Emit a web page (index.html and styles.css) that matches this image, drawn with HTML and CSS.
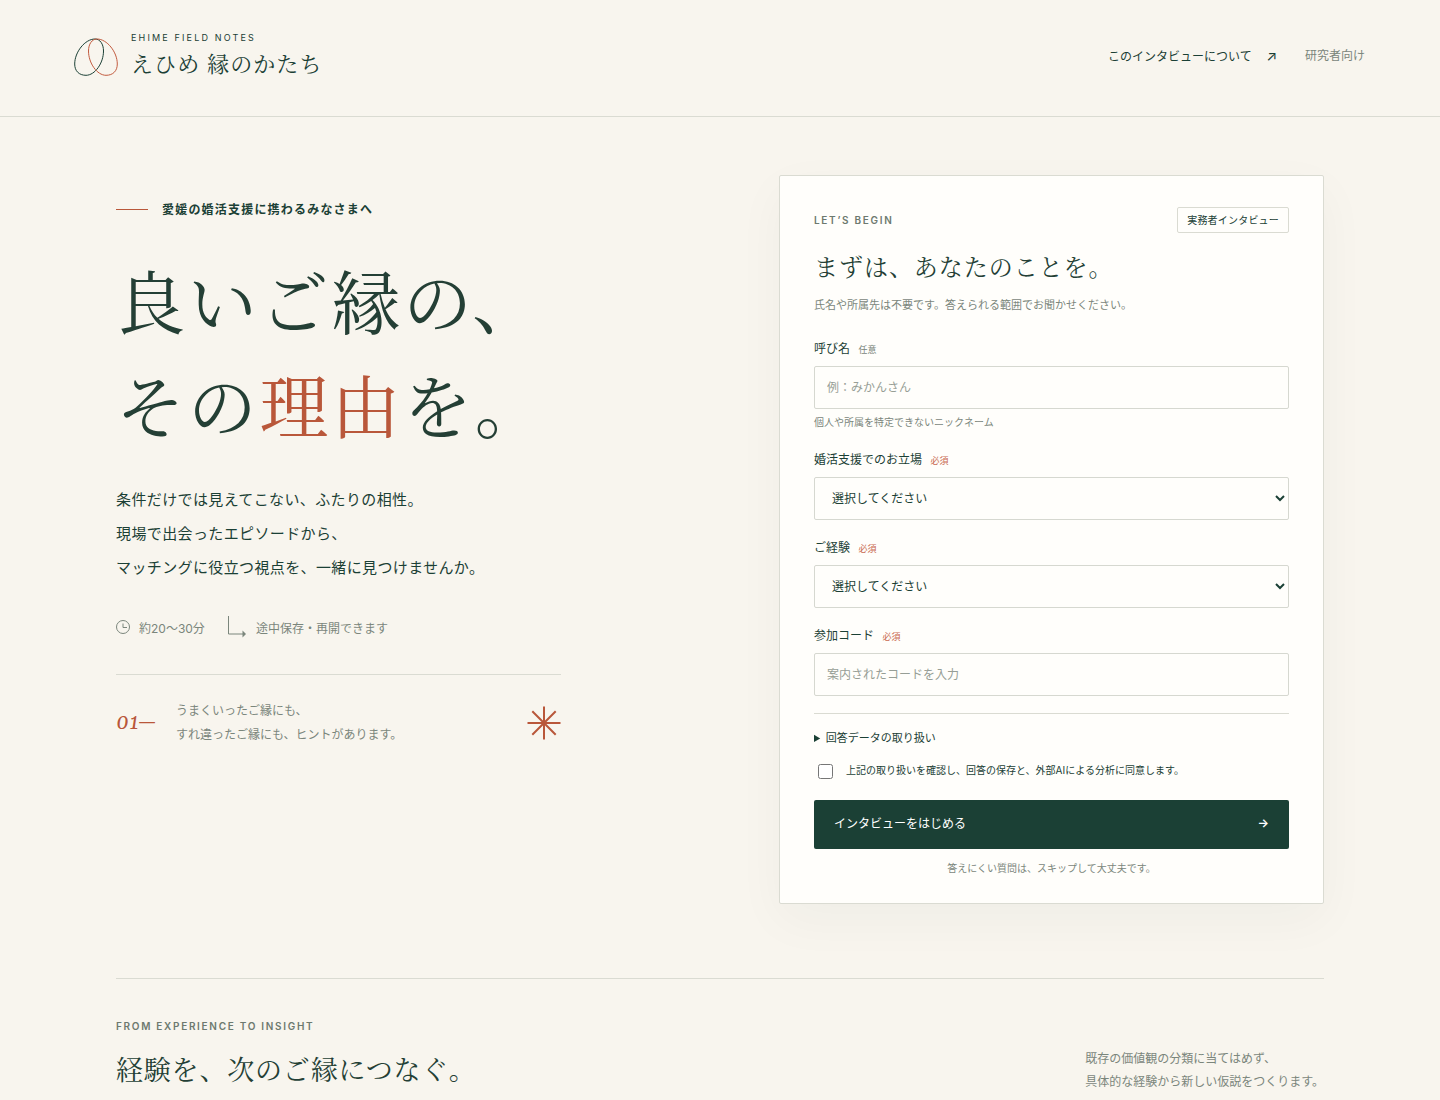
FILE: index.html
```html
<!DOCTYPE html>
<html lang="ja">
<head>
<meta charset="utf-8">
<meta name="viewport" content="width=device-width, initial-scale=1.0">
<title>えひめ 縁のかたち</title>
<link rel="stylesheet" href="styles.css">
</head>
<body>
<header class="site-header">
  <a class="brand" href="#">
    <svg class="brand-mark" viewBox="0 0 44 44" aria-hidden="true">
      <path d="M21 5C26 5 29.5 10 29.5 17C29.5 29 21 41.3 12 41.3C5 41.3 .7 37 .7 30C.7 18 11 5 21 5Z" stroke="#1b4035"/>
      <path d="M23 5C18 5 14.5 10 14.5 17C14.5 29 23 41.3 32 41.3C39 41.3 43.3 37 43.3 30C43.3 18 33 5 23 5Z" stroke="#c25b3f"/>
    </svg>
    <span class="brand-text">
      <span class="brand-sub">EHIME FIELD NOTES</span>
      <span class="brand-name">えひめ 縁のかたち</span>
    </span>
  </a>
  <nav class="site-nav">
    <a href="#about">このインタビューについて <span class="nav-arrow">↗</span></a>
    <a class="nav-muted" href="#research">研究者向け</a>
  </nav>
</header>

<main>
  <section class="hero">
    <div class="intro">
      <p class="eyebrow">愛媛の婚活支援に携わるみなさまへ</p>
      <h1>良いご縁の、<br>その<em>理由</em>を。</h1>
      <p class="lead">条件だけでは見えてこない、ふたりの相性。<br>現場で出会ったエピソードから、<br>マッチングに役立つ視点を、一緒に見つけませんか。</p>
      <div class="meta">
        <span class="meta-item">
          <svg class="icon-clock" viewBox="0 0 14 14" aria-hidden="true"><circle cx="7" cy="7" r="6.5"/><path d="M7 3.5V7.5H11"/></svg>
          約20〜30分
        </span>
        <span class="meta-item">
          <svg class="icon-resume" viewBox="0 0 20 22" aria-hidden="true"><path d="M1.5 0V18H16"/><path class="tip" d="M15.5 14.5L19 18L15.5 21.5Z"/></svg>
          途中保存・再開できます
        </span>
      </div>
      <div class="note">
        <span class="note-num">01—</span>
        <p>うまくいったご縁にも、<br>すれ違ったご縁にも、ヒントがあります。</p>
        <svg class="note-star" viewBox="0 0 34 34" aria-hidden="true"><path d="M17 .5V33.5M.5 17H33.5M5.3 5.3L28.7 28.7M28.7 5.3L5.3 28.7"/></svg>
      </div>
    </div>

    <form class="card">
      <div class="card-top">
        <span class="label-en">LET’S BEGIN</span>
        <span class="badge">実務者インタビュー</span>
      </div>
      <h2>まずは、あなたのことを。</h2>
      <p class="card-desc">氏名や所属先は不要です。答えられる範囲でお聞かせください。</p>

      <div class="field">
        <label for="nickname">呼び名 <small>任意</small></label>
        <input type="text" id="nickname" placeholder="例：みかんさん">
        <p class="help">個人や所属を特定できないニックネーム</p>
      </div>
      <div class="field">
        <label for="role">婚活支援でのお立場 <small class="required">必須</small></label>
        <select id="role"><option>選択してください</option></select>
      </div>
      <div class="field">
        <label for="years">ご経験 <small class="required">必須</small></label>
        <select id="years"><option>選択してください</option></select>
      </div>
      <div class="field">
        <label for="code">参加コード <small class="required">必須</small></label>
        <input type="text" id="code" placeholder="案内されたコードを入力">
      </div>

      <details class="policy">
        <summary>回答データの取り扱い</summary>
      </details>
      <label class="consent" for="consent">
        <input type="checkbox" id="consent">
        <span>上記の取り扱いを確認し、回答の保存と、外部AIによる分析に同意します。</span>
      </label>
      <button type="submit" class="start">インタビューをはじめる <span class="start-arrow">→</span></button>
      <p class="card-foot">答えにくい質問は、スキップして大丈夫です。</p>
    </form>
  </section>

  <section class="insight" id="about">
    <div>
      <p class="label-en">FROM EXPERIENCE TO INSIGHT</p>
      <h2>経験を、次のご縁につなぐ。</h2>
    </div>
    <p class="insight-text">既存の価値観の分類に当てはめず、<br>具体的な経験から新しい仮説をつくります。</p>
  </section>
</main>
</body>
</html>
```
FILE: styles.css
```css
:root {
  --paper: #f8f5ee;
  --card: #fffefb;
  --ink: #1b4035;
  --heading: #243f35;
  --muted: #7b867c;
  --accent: #b9573a;
  --line: #dadbd2;
  --serif: "Noto Serif CJK JP", "Noto Serif JP", serif;
  --sans: Inter, "Noto Sans CJK JP", sans-serif;
}

* {
  box-sizing: border-box;
}

body {
  margin: 0;
  background: var(--paper);
  color: var(--ink);
  font-family: var(--sans);
  font-size: 12px;
}

h1, h2, p {
  margin: 0;
}

h1, h2 {
  font-family: var(--serif);
  font-weight: 400;
  color: var(--heading);
}

a {
  color: inherit;
  text-decoration: none;
}

/* header */
.site-header {
  display: flex;
  justify-content: space-between;
  align-items: center;
  height: 117px;
  padding: 0 75px 4px;
  border-bottom: 1px solid var(--line);
}

.brand {
  display: flex;
  align-items: center;
  gap: 13px;
}

.brand-mark {
  width: 44px;
  height: 44px;
  margin-left: -1px;
  fill: none;
}

.brand-text {
  display: flex;
  flex-direction: column;
}

.brand-sub {
  font-size: 9px;
  line-height: 14px;
  letter-spacing: .24em;
}

.brand-name {
  font-family: var(--serif);
  font-size: 22px;
  line-height: 36px;
  letter-spacing: .05em;
}

.site-nav {
  display: flex;
  align-items: center;
  gap: 28px;
  line-height: 20px;
}

.nav-arrow {
  margin-left: 11px;
  font-size: 14px;
}

.nav-muted {
  color: var(--muted);
}

/* hero */
main {
  padding: 58px 116px;
}

.hero {
  display: grid;
  grid-template-columns: 445px 545px;
  justify-content: space-between;
  align-items: start;
  padding-bottom: 74px;
}

.intro {
  padding-top: 24px;
}

.eyebrow {
  display: flex;
  align-items: center;
  gap: 14px;
  font-weight: 700;
  line-height: 21px;
  letter-spacing: .1em;
}

.eyebrow::before {
  content: "";
  width: 32px;
  height: 1px;
  background: var(--accent);
}

h1 {
  margin-top: 28px;
  font-size: 69px;
  line-height: 104px;
  letter-spacing: .04em;
  white-space: nowrap;
}

h1 em {
  font-style: normal;
  color: var(--accent);
}

.lead {
  margin-top: 27px;
  font-size: 15px;
  line-height: 34px;
  letter-spacing: .025em;
}

.meta {
  display: flex;
  gap: 22px;
  margin-top: 31px;
  color: var(--muted);
}

.meta-item {
  display: flex;
  align-items: center;
  gap: 9px;
}

.meta svg {
  fill: none;
  stroke: currentColor;
}

.icon-clock {
  width: 14px;
  height: 14px;
}

.icon-resume {
  width: 20px;
  height: 22px;
}

.icon-resume .tip {
  fill: currentColor;
  stroke: none;
}

.note {
  display: flex;
  align-items: center;
  gap: 20px;
  margin-top: 36px;
  padding-top: 24px;
  border-top: 1px solid var(--line);
  color: var(--muted);
  line-height: 24px;
}

.note-num {
  font-family: Georgia, Gelasio, serif;
  font-size: 21px;
  font-style: italic;
  color: var(--accent);
}

.note-star {
  width: 34px;
  height: 34px;
  margin-left: auto;
  stroke: var(--accent);
  stroke-width: 2;
}

/* form card */
.card {
  padding: 31px 34px 25px;
  background: var(--card);
  border: 1px solid var(--line);
  border-radius: 2px;
  box-shadow: 0 16px 50px rgba(35, 63, 53, .04);
}

.card-top {
  display: flex;
  justify-content: space-between;
  align-items: center;
}

.label-en {
  font-size: 10px;
  font-weight: 600;
  line-height: 16px;
  letter-spacing: .17em;
  color: #6d796f;
}

.badge {
  padding: 0 9px;
  font-size: 10px;
  line-height: 24px;
  letter-spacing: .02em;
  border: 1px solid var(--line);
  border-radius: 2px;
}

.card h2 {
  margin-top: 14px;
  font-size: 24px;
  line-height: 38px;
  letter-spacing: .04em;
}

.card-desc {
  margin: 10px 0 23px;
  font-size: 11px;
  line-height: 20px;
  color: var(--muted);
}

.field {
  margin-bottom: 17px;
}

.field label {
  display: block;
  margin-bottom: 5px;
  line-height: 22px;
}

.field small {
  margin-left: 5px;
  font-size: 9px;
  color: var(--muted);
}

.field .required {
  color: #c8694f;
}

.field input,
.field select {
  display: block;
  width: 100%;
  height: 43px;
  padding: 0 13px;
  font: inherit;
  color: inherit;
  background: var(--card);
  border: 1px solid #d6d8d0;
  border-radius: 2px;
}

.field input {
  padding: 0 12px;
}

.field input::placeholder {
  color: #979e96;
}

.help {
  margin-top: 4px;
  font-size: 10px;
  line-height: 19px;
  color: var(--muted);
}

.policy {
  padding-top: 14px;
  border-top: 1px solid var(--line);
  font-size: 11px;
  line-height: 20px;
}

.consent {
  display: flex;
  align-items: flex-start;
  gap: 13px;
  margin: 12px 0 20px;
  font-size: 10px;
  line-height: 20px;
}

.consent input {
  width: 15px;
  height: 15px;
  margin: 4px 0 0 4px;
}

.start {
  display: flex;
  justify-content: space-between;
  align-items: center;
  width: 100%;
  height: 49px;
  padding: 0 20px 4px;
  font: inherit;
  color: #fff;
  background: #1b4035;
  border: 0;
  border-radius: 2px;
  cursor: pointer;
}

.start-arrow {
  font-weight: 600;
}

.card-foot {
  margin-top: 9px;
  font-size: 10px;
  line-height: 20px;
  text-align: center;
  color: var(--muted);
}

/* insight */
.insight {
  display: flex;
  justify-content: space-between;
  align-items: flex-end;
  padding-top: 39px;
  border-top: 1px solid var(--line);
}

.insight h2 {
  margin-top: 11px;
  font-size: 27px;
  line-height: 48px;
  letter-spacing: .03em;
}

.insight-text {
  line-height: 23px;
  color: var(--muted);
}
```
